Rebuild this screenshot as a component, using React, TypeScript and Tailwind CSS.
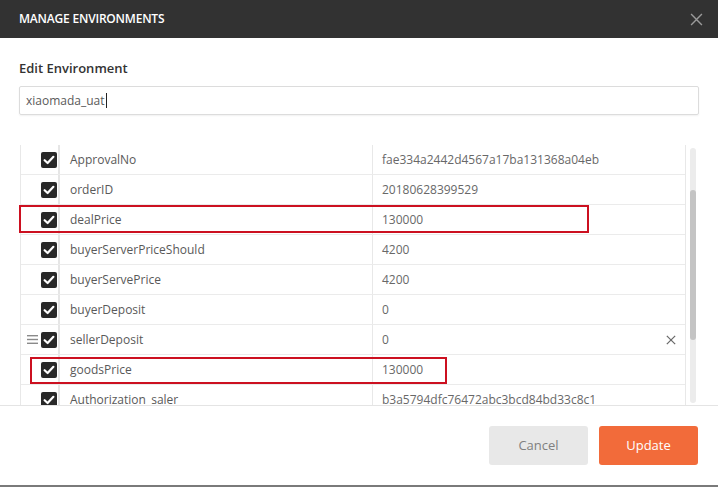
import React from "react";

type Row = {
  key: string;
  value: string;
  hover?: boolean;
};

const ROWS: Row[] = [
  { key: "ApprovalNo", value: "fae334a2442d4567a17ba131368a04eb" },
  { key: "orderID", value: "20180628399529" },
  { key: "dealPrice", value: "130000" },
  { key: "buyerServerPriceShould", value: "4200" },
  { key: "buyerServePrice", value: "4200" },
  { key: "buyerDeposit", value: "0" },
  { key: "sellerDeposit", value: "0", hover: true },
  { key: "goodsPrice", value: "130000" },
  { key: "Authorization_saler", value: "b3a5794dfc76472abc3bcd84bd33c8c1" },
];

function CheckBox() {
  return (
    <svg width="16" height="16" viewBox="0 0 16 16" className="block">
      <rect x="0" y="0" width="16" height="16" rx="2" fill="#282828" />
      <path
        d="M3.6 8.2 L6.6 11 L12.4 4.8"
        fill="none"
        stroke="#fff"
        strokeWidth="2.2"
        strokeLinecap="round"
        strokeLinejoin="round"
      />
    </svg>
  );
}

function DragHandle() {
  return (
    <svg width="11" height="9" viewBox="0 0 11 9" className="block">
      <rect x="0" y="0" width="11" height="1.4" fill="#8a8a8a" />
      <rect x="0" y="3.8" width="11" height="1.4" fill="#8a8a8a" />
      <rect x="0" y="7.6" width="11" height="1.4" fill="#8a8a8a" />
    </svg>
  );
}

function Cross({ size, color, width }: { size: number; color: string; width: number }) {
  return (
    <svg width={size} height={size} viewBox="0 0 12 12" className="block">
      <path d="M1 1 L11 11 M11 1 L1 11" stroke={color} strokeWidth={width} fill="none" />
    </svg>
  );
}

export default function App() {
  return (
    <div
      className="relative flex h-[487px] w-[718px] flex-col overflow-hidden bg-white text-[#505050]"
      style={{ fontFamily: '"Open Sans", "Noto Sans", sans-serif' }}
    >
      {/* header */}
      <div className="flex h-[38px] shrink-0 items-center justify-between bg-[#323232] pr-[15px] pl-[19px]">
        <span className="text-[12px] font-semibold tracking-[-0.2px] text-white">MANAGE ENVIRONMENTS</span>
        <Cross size={13} color="#9a9a9a" width={1.3} />
      </div>

      {/* body */}
      <div className="flex shrink-0 flex-col px-[19px] pt-[21px]">
        <label className="text-[13px] leading-[18px] font-semibold text-[#333]">Edit Environment</label>
        <div className="mt-[9px] flex h-[29px] items-center rounded-[2px] border border-[#dcdcdc] px-[6px] shadow-[0_1px_2px_rgba(0,0,0,0.06)]">
          <span className="text-[12px] text-[#5a5a5a]">xiaomada_uat</span>
          <span className="ml-px h-[15px] w-px bg-[#222]" />
        </div>
      </div>

      {/* table */}
      <div className="mt-[30px] flex h-[260px] shrink-0 pl-[20px]">
        <div className="h-full w-[666px] overflow-hidden border-x border-[#e8e8e8]">
          {ROWS.map((row) => (
            <div key={row.key} className="flex h-[30px] border-b border-[#ebebeb] text-[12px]">
              <div className="flex w-[39px] shrink-0 items-center border-r-2 border-[#e6e6e6]">
                <div className="flex w-[20px] justify-center pl-[2px]">{row.hover && <DragHandle />}</div>
                <CheckBox />
              </div>
              <div className="flex w-[313px] shrink-0 items-center border-r border-[#e8e8e8] pl-[10px] text-[#595959]">
                {row.key}
              </div>
              <div className="flex flex-1 items-center justify-between pr-[9px] pl-[9px] text-[#686868]">
                <span>{row.value}</span>
                {row.hover && <Cross size={10} color="#6a6a6a" width={1.5} />}
              </div>
            </div>
          ))}
        </div>
        {/* scrollbar */}
        <div className="mt-[3px] ml-[4px] flex h-[255px] w-[6px] flex-col rounded-[3px] bg-[#ececec]">
          <div className="mt-[42px] h-[150px] w-full rounded-[3px] bg-[#c4c4c4]" />
        </div>
      </div>

      {/* footer */}
      <div className="flex flex-1 items-start justify-end gap-[11px] border-t border-[#e4e4e4] pt-[20px] pr-[20px]">
        <button className="h-[39px] w-[99px] rounded-[3px] bg-[#e8e8e8] text-[13px] text-[#808080]">Cancel</button>
        <button className="h-[39px] w-[99px] rounded-[3px] bg-[#f26b3a] text-[13px] text-white">Update</button>
      </div>
      <div className="h-[2px] w-full shrink-0 bg-[#7a7a7a]" />

      {/* red annotation boxes */}
      <div className="pointer-events-none absolute top-[205px] left-[19px] h-[28px] w-[570px] border-2 border-[#cc1020]" />
      <div className="pointer-events-none absolute top-[357px] left-[30px] h-[27px] w-[417px] border-2 border-[#cc1020]" />
    </div>
  );
}
